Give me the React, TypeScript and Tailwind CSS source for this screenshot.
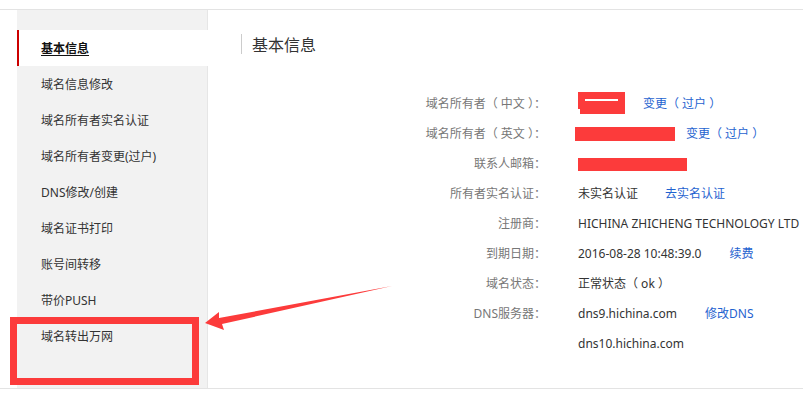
import React from 'react';

const menu = [
  '基本信息',
  '域名信息修改',
  '域名所有者实名认证',
  '域名所有者变更(过户)',
  'DNS修改/创建',
  '域名证书打印',
  '账号间转移',
  '带价PUSH',
  '域名转出万网',
];

const Link: React.FC<{ ml: string; children: React.ReactNode }> = ({ ml, children }) => (
  <span className={`${ml} text-[#1f63d0] cursor-pointer`}>{children}</span>
);

export default function App() {
  const rows: { label: string; value: React.ReactNode }[] = [
    {
      label: '域名所有者（ 中文 ）：',
      value: (
        <>
          <span className="relative inline-block w-[47px] h-[22px] align-middle bg-[#fc3b3b] -mt-[2px]">
            <span className="absolute left-[7px] top-[7px] w-[33px] h-[2px] bg-white" />
            <span className="absolute left-0 bottom-0 w-[2px] h-[5px] bg-white" />
          </span>
          <Link ml="ml-[18px]">变更（ 过户 ）</Link>
        </>
      ),
    },
    {
      label: '域名所有者（ 英文 ）：',
      value: (
        <>
          <span className="inline-block w-[100px] h-[14px] align-middle bg-[#fc3b3b] -ml-[3px]" />
          <Link ml="ml-[11px]">变更（ 过户 ）</Link>
        </>
      ),
    },
    {
      label: '联系人邮箱：',
      value: <span className="inline-block w-[109px] h-[13px] align-middle bg-[#fc3b3b]" />,
    },
    {
      label: '所有者实名认证：',
      value: (
        <>
          <span>未实名认证</span>
          <Link ml="ml-[27px]">去实名认证</Link>
        </>
      ),
    },
    { label: '注册商：', value: <span>HICHINA ZHICHENG TECHNOLOGY LTD</span> },
    {
      label: '到期日期：',
      value: (
        <>
          <span>2016-08-28 10:48:39.0</span>
          <Link ml="ml-[28px]">续费</Link>
        </>
      ),
    },
    { label: '域名状态：', value: <span>正常状态（ ok ）</span> },
    {
      label: 'DNS服务器：',
      value: (
        <>
          <span>dns9.hichina.com</span>
          <Link ml="ml-[28px]">修改DNS</Link>
        </>
      ),
    },
    { label: '', value: <span>dns10.hichina.com</span> },
  ];

  return (
    <div
      className="relative w-[803px] h-[406px] overflow-hidden bg-white pt-[9px]"
      style={{ fontFamily: '"Noto Sans", "Noto Sans CJK SC", sans-serif' }}
    >
      <div className="flex border-t border-b border-[#e3e3e3]">
        {/* Sidebar */}
        <div className="ml-[17px] w-[191px] shrink-0 bg-[#f2f2f2] border-r border-[#e6e6e6] pt-[20px] pb-[34px]">
          {menu.map((m, i) =>
            i === 0 ? (
              <div
                key={m}
                className="h-[36px] -mr-[2px] flex items-center bg-white border-l-2 border-[#cc0000] pl-[22px] pt-[1px] text-[12px] font-bold text-[#111] underline underline-offset-2"
              >
                {m}
              </div>
            ) : (
              <div key={m} className="h-[36px] flex items-center pl-[24px] pt-[1px] text-[12px] text-[#333]">
                {m}
              </div>
            )
          )}
        </div>

        {/* Content */}
        <div className="flex-1 min-w-0">
          <div className="mt-[24px] ml-[33px] h-[20px] border-l border-[#cccccc] pl-[10px] pt-[1px] flex items-center text-[16px] text-[#333]">
            基本信息
          </div>
          <div className="mt-[35px]">
            {rows.map((r, i) => (
              <div key={i} className="flex items-center h-[30px] text-[12px] whitespace-nowrap">
                <div className="w-[338px] shrink-0 text-right text-[#777]">{r.label}</div>
                <div className="pl-[32px] text-[#333] flex items-center">{r.value}</div>
              </div>
            ))}
          </div>
        </div>
      </div>

      {/* Annotation: red box */}
      <div className="absolute left-[10px] top-[317px] w-[189px] h-[68px] border-[7px] border-[#fc3b3b]" />

      {/* Annotation: arrow */}
      <svg className="absolute left-0 top-0" width="803" height="406" viewBox="0 0 803 406">
        <polygon
          points="205,323 219,312 219,318 392,286 222,324 224,330"
          fill="#fc3b3b"
        />
      </svg>
    </div>
  );
}
